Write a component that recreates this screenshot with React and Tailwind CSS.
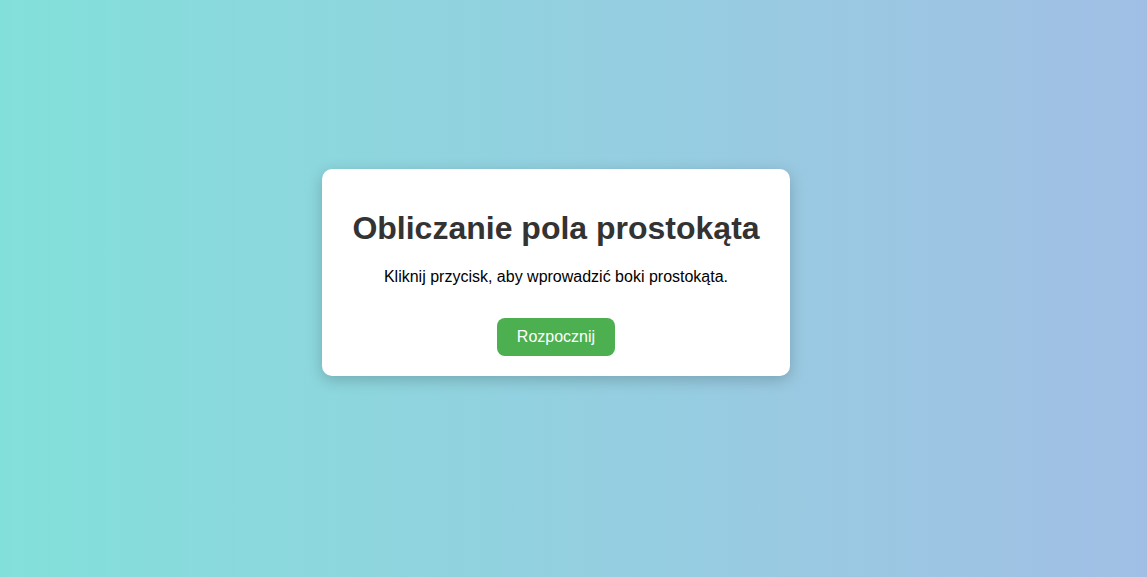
export default function App() {
  return (
    <div
      className="min-h-screen flex items-center justify-center bg-gradient-to-r from-[#82e0da] to-[#a1bfe5] pr-[35px] pb-[32px]"
      style={{ fontFamily: '"Liberation Sans", Arial, sans-serif' }}
    >
      <div className="w-[468px] bg-white rounded-[10px] p-5 text-center shadow-[0_4px_15px_rgba(0,0,0,0.2)]">
        <h1 className="text-[32px] leading-[37px] font-bold text-[#333] my-[21px]">
          Obliczanie pola prostokąta
        </h1>
        <p className="text-base leading-[18px] text-black">
          Kliknij przycisk, aby wprowadzić boki prostokąta.
        </p>
        <button className="mt-8 h-[38px] px-5 rounded-lg bg-[#4caf50] text-white text-base leading-[18px]">
          Rozpocznij
        </button>
      </div>
    </div>
  )
}
